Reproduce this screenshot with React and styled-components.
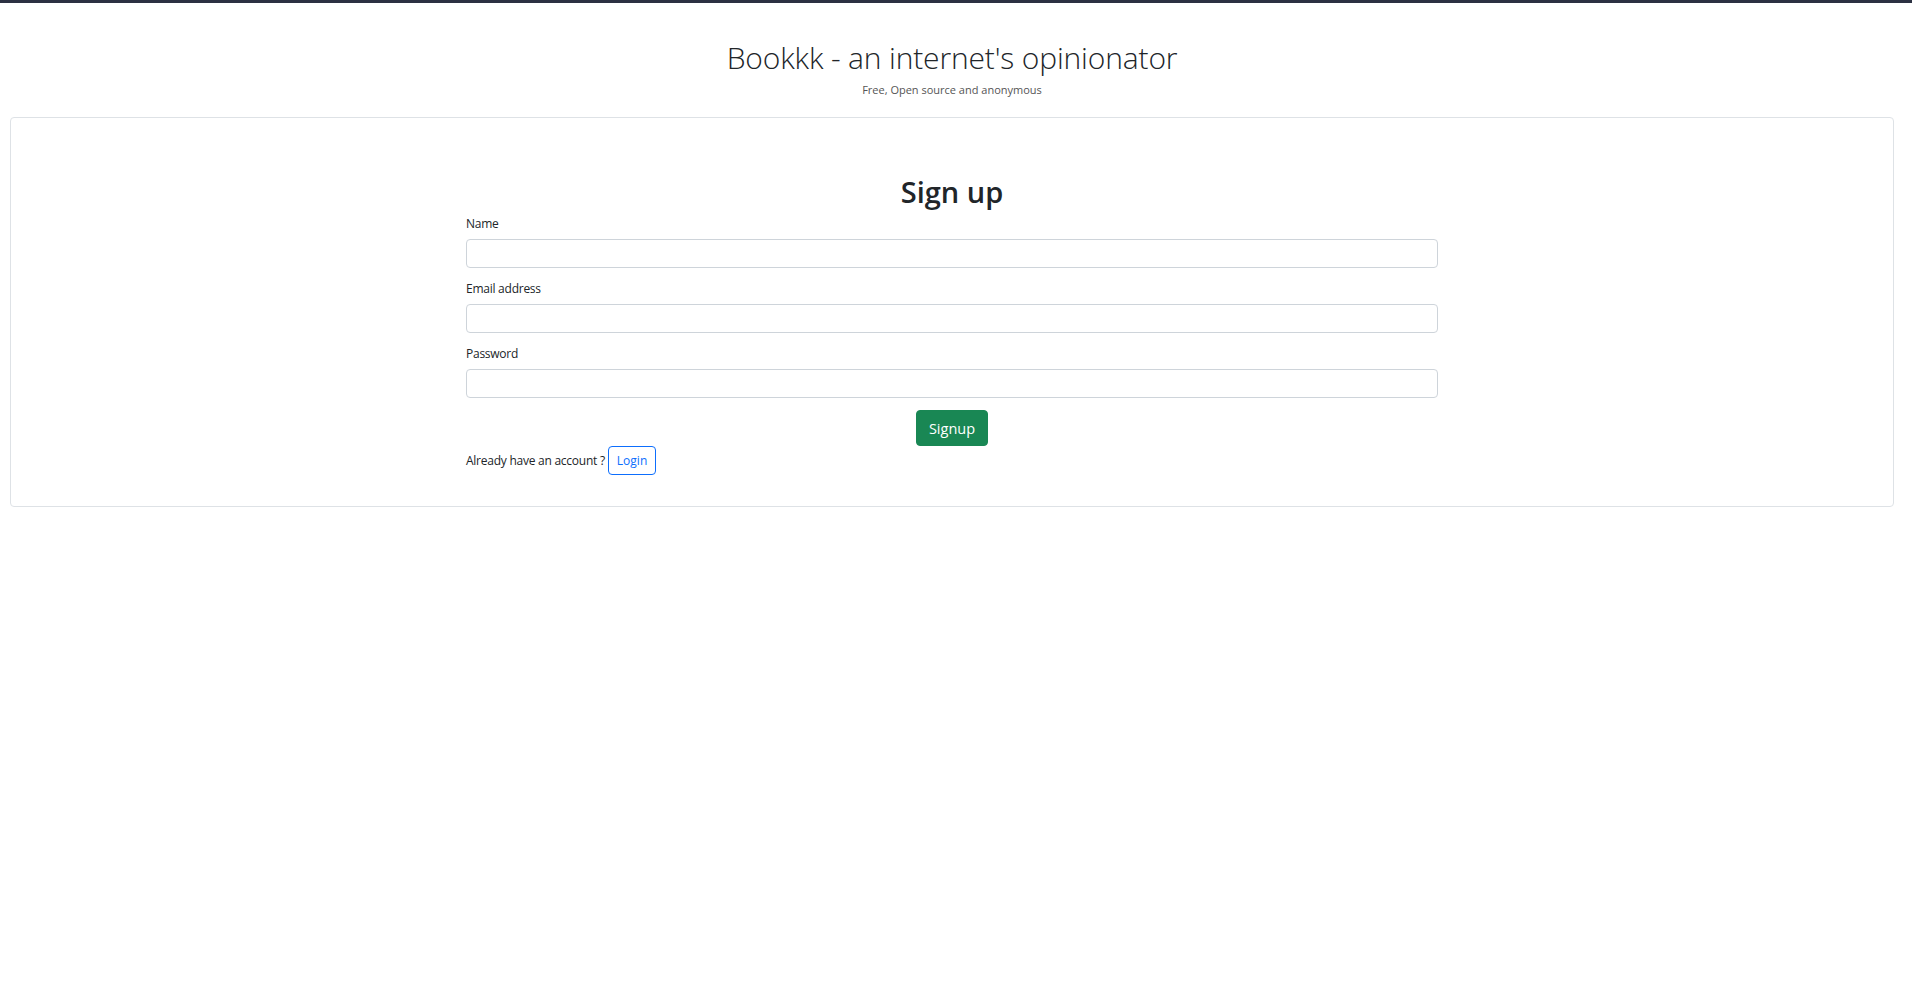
import React from 'react';
import styled, { createGlobalStyle } from 'styled-components';

const GlobalStyle = createGlobalStyle`
  * { box-sizing: border-box; }
  body {
    margin: 0;
    background: #fff;
    font-family: "Open Sans", "Noto Sans", sans-serif;
    color: #212529;
  }
`;

const TopBar = styled.div`
  height: 3px;
  background: #2c3142;
`;

const Page = styled.div`
  padding: 0 18px 0 10px;
`;

const Header = styled.header`
  display: flex;
  flex-direction: column;
  align-items: center;
  padding-top: 37px;
  padding-bottom: 19px;
`;

const Title = styled.h1`
  margin: 0;
  font-size: 30px;
  line-height: 36px;
  font-weight: 300;
  letter-spacing: -0.15px;
  color: #212529;
`;

const Tagline = styled.p`
  margin: 6px 0 0;
  font-size: 11px;
  line-height: 16px;
  color: #555;
`;

const Card = styled.main`
  border: 1px solid #dee2e6;
  border-radius: 4px;
  padding: 56px 0 31px;
  display: flex;
  justify-content: center;
`;

const Form = styled.form`
  width: 972px;
  display: flex;
  flex-direction: column;
`;

const Heading = styled.h2`
  margin: 0 0 4px;
  text-align: center;
  font-size: 29px;
  line-height: 36px;
  font-weight: 600;
  color: #212529;
`;

const Field = styled.div`
  display: flex;
  flex-direction: column;
  margin-bottom: 11px;
`;

const Label = styled.label`
  font-size: 12px;
  line-height: 19px;
  letter-spacing: -0.25px;
  margin-bottom: 6px;
  color: #212529;
`;

const Input = styled.input`
  height: 29px;
  border: 1px solid #ced4da;
  border-radius: 4px;
  padding: 0 10px;
  font: inherit;
  font-size: 13px;
  outline: none;
`;

const Actions = styled.div`
  display: flex;
  justify-content: center;
  margin-top: 1px;
`;

const Button = styled.button`
  height: 36px;
  padding: 0 12px;
  border-radius: 4px;
  font-family: inherit;
  cursor: pointer;
  border: 1px solid ${p => (p.$outline ? '#0d6efd' : '#198754')};
  background: ${p => (p.$outline ? '#fff' : '#198754')};
  color: ${p => (p.$outline ? '#0d6efd' : '#fff')};
  font-size: ${p => (p.$small ? '12px' : '14.5px')};
  ${p => p.$small && 'height: 29px; padding: 0 8px;'}
`;

const LoginRow = styled.div`
  display: flex;
  align-items: center;
  gap: 3px;
  font-size: 12px;
  letter-spacing: -0.25px;
  color: #212529;
`;

const App = () => {
  return (
    <>
      <GlobalStyle />
      <TopBar />
      <Page>
        <Header>
          <Title>Bookkk - an internet's opinionator</Title>
          <Tagline>Free, Open source and anonymous</Tagline>
        </Header>
        <Card>
          <Form onSubmit={e => e.preventDefault()}>
            <Heading>Sign up</Heading>
            <Field>
              <Label>Name</Label>
              <Input type="text" />
            </Field>
            <Field>
              <Label>Email address</Label>
              <Input type="email" />
            </Field>
            <Field>
              <Label>Password</Label>
              <Input type="password" />
            </Field>
            <Actions>
              <Button type="submit">Signup</Button>
            </Actions>
            <LoginRow>
              Already have an account ?
              <Button type="button" $outline $small>Login</Button>
            </LoginRow>
          </Form>
        </Card>
      </Page>
    </>
  );
};

export default App;
